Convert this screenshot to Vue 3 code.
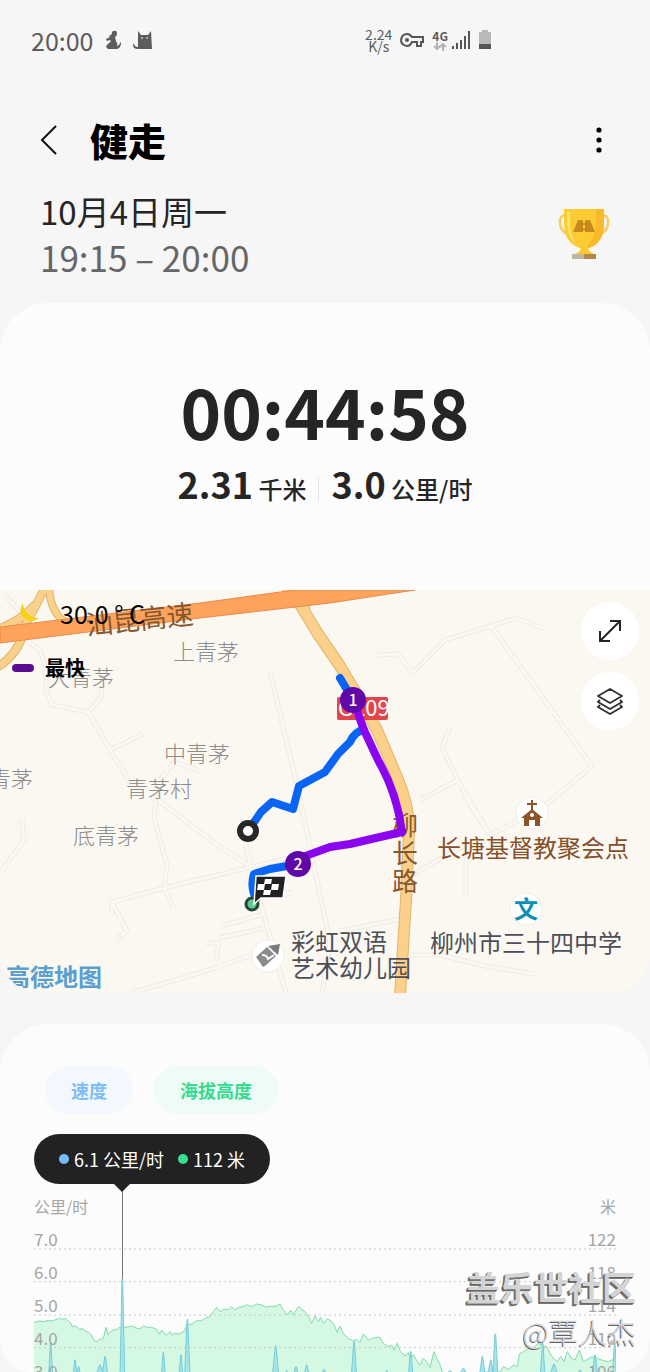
<script setup>
import { computed } from "vue";

const villages = [
  { name: "上青茅", x: 173, y: 70 },
  { name: "大青茅", x: 48, y: 96 },
  { name: "中青茅", x: 164, y: 172 },
  { name: "青茅", x: -11, y: 197 },
  { name: "青茅村", x: 126, y: 207 },
  { name: "底青茅", x: 73, y: 254 },
];

const places = [
  { name: "长塘基督教聚会点", x: 437, y: 267, kind: "brown" },
  { name: "柳州市三十四中学", x: 430, y: 362, kind: "dark" },
  { name: "彩虹双语", x: 291, y: 361, kind: "dark" },
  { name: "艺术幼儿园", x: 291, y: 387, kind: "dark" },
];

const lanes = [
  "M5 5L25 28M30 53L40 60 46 78 46 100 52 115 88 122 101 107 102 95M88 122L110 160 132 195M110 160L143 144M160 190L174 172 200 181",
  "M270 82L297 195 330 352 322 403M378 65L398 64 413 83 445 50 491 36 516 28 545 39M491 36L592 176 540 220 490 245 463 200M450 137L442 158 458 190 470 215 490 245M420 210L458 190",
  "M158 210L213 252 248 275M156 208L154 228 167 275 164 298 174 318M0 283L24 250 22 230M112 325L112 312 164 298 330 258M112 312L127 341 116 350M246 255L254 290 286 403",
  "M132 403L215 378 260 362M205 353L219 353 216 365 222 377M219 348L270 337M222 336L264 324M275 307L293 302M340 341L400 329M402 290L466 255M466 260L466 308M410 365L440 365 490 377 535 384",
];

const ticks = [
  { speed: "7.0", height: "122" },
  { speed: "6.0", height: "118" },
  { speed: "5.0", height: "114" },
  { speed: "4.0", height: "110" },
  { speed: "3.0", height: "106" },
];

const gridLines = [597, 695, 795, 893];

const elevation = [
  102, 818, 115, 813, 130, 815, 145, 811, 155, 813, 170, 808, 178, 804, 185, 808,
  195, 805, 205, 814, 212, 818, 217, 830, 228, 828, 238, 838, 248, 836, 258, 845,
  265, 846, 275, 855, 282, 872, 292, 875, 300, 865, 305, 870, 312, 858, 318, 832,
  324, 855, 335, 842, 350, 838, 360, 832, 375, 832, 388, 830, 398, 828, 412, 836,
  420, 836, 430, 828, 440, 832, 455, 832, 470, 838, 478, 852, 485, 840, 492, 850,
  500, 855, 510, 845, 516, 855, 525, 850, 535, 852, 545, 848, 555, 840, 560, 825,
  575, 822, 590, 812, 605, 812, 620, 802, 628, 802, 640, 785, 650, 772, 660, 785,
  672, 778, 685, 778, 695, 770, 705, 780, 715, 772, 730, 770, 740, 764, 755, 770,
  770, 762, 785, 765, 800, 772, 810, 768, 825, 770, 840, 762, 850, 780, 862, 795,
  872, 780, 880, 795, 895, 770, 905, 778, 915, 785, 925, 798, 935, 820, 945, 798,
  955, 815, 962, 802, 970, 820, 982, 806, 992, 812, 1002, 825, 1012, 848, 1020, 828,
  1030, 850, 1045, 866, 1060, 872, 1070, 868, 1080, 878, 1090, 852, 1105, 870,
  1118, 865, 1128, 862, 1140, 862, 1150, 880, 1165, 890, 1175, 885, 1182, 900,
  1192, 880, 1200, 902, 1215, 918, 1225, 908, 1232, 928, 1240, 914, 1252, 935,
  1260, 945, 1270, 925, 1280, 935, 1290, 952, 1302, 905, 1310, 925, 1318, 938,
  1328, 968, 1400, 972, 1450, 966, 1500, 966, 1510, 950, 1525, 958, 1540, 945,
  1552, 950, 1558, 912, 1570, 905, 1585, 895, 1600, 893, 1615, 880, 1630, 888,
  1640, 890, 1650, 910, 1660, 925, 1672, 935, 1682, 920, 1692, 935, 1702, 905,
  1715, 925, 1725, 930, 1738, 900, 1750, 935, 1760, 930, 1775, 920, 1790, 925,
  1805, 930, 1825, 935, 1848, 925,
];

// [x, peak, half width]
const spikes = [
  [152, 880, 6], [225, 930, 6], [236, 950, 6], [300, 945, 14], [315, 920, 9],
  [367, 685, 7], [490, 908, 6], [543, 915, 6], [562, 808, 8], [827, 888, 10],
  [860, 962, 5], [888, 950, 10], [920, 945, 9], [972, 958, 8], [1062, 875, 8],
  [1160, 962, 8], [1232, 905, 7], [1350, 962, 20], [1390, 955, 16], [1447, 920, 9],
  [1472, 930, 9], [1486, 852, 8], [1628, 880, 7], [1662, 942, 14], [1740, 960, 10],
  [1785, 915, 8], [1844, 875, 6],
];

const elevationLine = computed(() => "M" + elevation.join(" "));
const elevationArea = computed(() => elevationLine.value + " V980 H102 Z");
const speedPath = computed(() =>
  spikes.map(([x, peak, w]) => `M${x - w} 980L${x - 1} ${peak}h2L${x + w} 980`).join("")
);
</script>

<template>
  <div class="page">
    <div class="status-bar">
      <span class="clock">20:00</span>
      <svg class="status-girl" viewBox="0 0 18 20" width="18" height="20">
        <path d="M9 1q4-1 4 2 0 3-2 4l1 4q2 3 1 5 3-1 3-4l1 1q0 5-4 6H4q-3-2-1-4l4-4-1-1-3 1-1-2 4-2-1-1 3-2q-1-2 1-3z" />
      </svg>
      <svg class="status-cat" viewBox="0 0 20 20" width="20" height="20">
        <path d="M5 1l3 4h7l3-4 1 18H5q-5 0-5-4l1-2q0 4 4 4z" />
        <path d="M8 8h2M13 8h2" stroke="#f6f6f6" />
      </svg>
      <div class="status-right">
        <div class="rate">2.24<br />K/s</div>
        <svg viewBox="0 0 24 16" width="24" height="16" fill="none" stroke="#555" stroke-width="2">
          <path d="M12 5h11v5h-2v4h-4v-4h-5Q10 14 7 14 1 13 1 8 2 2 7 2q3 0 5 3z" />
          <circle cx="7" cy="8" r="2" fill="#555" stroke="none" />
        </svg>
        <div class="network">
          <span>4G</span>
          <svg viewBox="0 0 14 9" width="14" height="9" fill="none" stroke="#b5b5b5" stroke-width="2">
            <path d="M4 0v7M1 4l3 3 3-3M10 9V2M7 5l3-3 3 3" />
          </svg>
        </div>
        <svg class="signal" viewBox="0 0 18 18" width="18" height="18" fill="none" stroke="#555" stroke-width="2">
          <path d="M1 18v-3M5 18v-6M9 18V9M13 18V5M17 18V0" />
        </svg>
        <svg viewBox="0 0 14 20" width="14" height="20">
          <path d="M4 0h6v2h3v12H1V2h3z" fill="#b9b9b9" />
          <path d="M1 14h12v5H1z" fill="#555" />
        </svg>
      </div>
    </div>

    <header class="title-bar">
      <button class="icon-btn" aria-label="返回">
        <svg viewBox="0 0 18 32" width="18" height="32" fill="none" stroke="#111" stroke-width="2">
          <path d="M16 2L2 16l14 14" />
        </svg>
      </button>
      <h1>健走</h1>
      <button class="icon-btn more" aria-label="更多">
        <svg viewBox="0 0 6 28" width="6" height="28">
          <circle cx="3" cy="4" r="2.6" />
          <circle cx="3" cy="14" r="2.6" />
          <circle cx="3" cy="24" r="2.6" />
        </svg>
      </button>
    </header>

    <section class="session">
      <div>
        <p class="date">10月4日周一</p>
        <p class="period">19:15 – 20:00</p>
      </div>
      <svg class="trophy" viewBox="0 0 52 52" width="52" height="52">
        <path d="M8 7Q1 7 2 16q1 9 12 12M44 7q7 0 6 9-1 9-12 12" fill="none" stroke="#f8cf60" stroke-width="2.5" />
        <path d="M6 1h40v14q0 20-15 25h-9Q6 35 6 15z" fill="#fdcc34" />
        <path d="M38 1h8v14q0 20-15 25h-4Q38 30 38 15z" fill="#f8b92c" />
        <path d="M9 4v11q1 15 9 20-6-8-6-20V4z" fill="#ffe372" />
        <path d="M23 38h7l1 5 5 3H17l5-3z" fill="#fcc72f" />
        <path d="M14 46h12v5H14z" fill="#bdb79f" />
        <path d="M26 46h12v5H26z" fill="#b48650" />
        <path d="M20 12h12l5 12H15z" fill="#c88a1c" />
        <path d="M26 12v3m0 2v3m0 2v2" stroke="#fdcc34" stroke-width="2" />
      </svg>
    </section>

    <section class="summary">
      <div class="duration">00:44:58</div>
      <div class="stats">
        <div><b>2.31</b> 千米</div>
        <i class="divider"></i>
        <div><b>3.0</b> 公里/时</div>
      </div>
    </section>

    <section class="map">
      <svg class="map-canvas" viewBox="0 0 650 403">
        <rect width="650" height="403" fill="#fbf8f2" />
        <g fill="none" stroke-linejoin="round">
          <g stroke="#eeebe6" stroke-width="5">
            <path v-for="lane in lanes" :key="lane" :d="lane" />
          </g>
          <g stroke="#fbf8f3" stroke-width="3">
            <path v-for="lane in lanes" :key="lane" :d="lane" />
          </g>
          <g stroke="#dfb46c" stroke-width="12">
            <path d="M46-4L26 34Q20 64-4 78M-4 40Q20 32 36 14" stroke-width="9" />
            <path d="M49-4Q50 22 65 32M284-4L306 24M306 8V26" stroke-width="8" />
            <path d="M295 6L318 44 340 76 356 103 377 140 397 187Q409 215 409 240L406 310 400 406" />
          </g>
          <g stroke="#fbd08a" stroke-width="10">
            <path d="M46-4L26 34Q20 64-4 78M-4 40Q20 32 36 14" stroke-width="7" />
            <path d="M49-4Q50 22 65 32M284-4L306 24M306 8V26" stroke-width="6" />
            <path d="M295 6L318 44 340 76 356 103 377 140 397 187Q409 215 409 240L406 310 400 406" />
          </g>
        </g>
        <path d="M0 37L200 13 295 0H415L330 13 200 28 0 53z" fill="#ffa35c" stroke="#e58c4b" />

        <g class="village">
          <text v-for="v in villages" :key="v.name" :x="v.x" :y="v.y">{{ v.name }}</text>
        </g>
        <g class="road-name">
          <text x="87" y="45" transform="rotate(-6 87 45)" class="highway">汕昆高速</text>
          <text x="392" y="245">柳</text>
          <text x="392" y="273">长</text>
          <text x="392" y="301">路</text>
        </g>

        <g fill="#fff" stroke="#f0eeea">
          <circle cx="532" cy="223" r="16" />
          <circle cx="526" cy="319" r="16" />
          <circle cx="268" cy="366" r="16" />
        </g>
        <path d="M532 210v13M527 214h10" stroke="#8d5527" stroke-width="2" />
        <path d="M532 219l11 9h-3v8h-5v-6h-6v6h-5v-8h-3z" fill="#8d5527" />
        <circle cx="532" cy="225" r="2" fill="#fff" />
        <text x="514" y="328" class="school">文</text>
        <path d="M256 367l11-10 9 9-11 10q-3 2-4-2z" fill="#8b8b8b" />
        <path d="M268 356l12-2-2 11z" fill="#7b7b7b" />
        <path d="M262 365q5 0 6 4l6-4" fill="none" stroke="#fff" stroke-width="2" />
        <g class="place">
          <text v-for="p in places" :key="p.name" :x="p.x" :y="p.y" :class="p.kind">{{ p.name }}</text>
        </g>

        <rect x="337" y="107" width="51" height="23" rx="2" fill="#e3454c" />
        <text x="338" y="126" class="route-no">G209</text>

        <g fill="none" stroke-width="8" stroke-linecap="round" stroke-linejoin="round">
          <path d="M340 88L353 110M364 140Q355 141 350 152L338 164 325 182 299 196 293 219 272 212 261 222 250 238M298 274L270 279 254 284Q250 296 256 309" stroke="#0a64f5" />
          <path d="M353 110L364 140 378 170Q397 203 402 242L380 247 350 254 330 257 300 268" stroke="#8b06ef" />
        </g>
        <circle cx="353" cy="110" r="13" fill="#6109a8" />
        <text x="353" y="116" class="km">1</text>
        <circle cx="298" cy="274" r="13" fill="#6109a8" />
        <text x="298" y="280" class="km">2</text>
        <circle cx="248" cy="241" r="8" fill="#fff" stroke="#272727" stroke-width="6" />
        <circle cx="252" cy="314" r="6" fill="#5ecb8c" stroke="#27443a" stroke-width="3" />
        <path d="M256 286h30l-3 22h-22l-7 6z" fill="#222" stroke="#fff" stroke-width="1.5" />
        <path d="M265 289h7l-1 5h-7zM258 294h7l-1 6h-7zM272 294h7l-1 6h-7zM264 300h7l-1 5h-7z" fill="#fff" />
        <text x="6" y="396" class="brand">高德地图</text>
      </svg>

      <div class="weather">
        <svg viewBox="0 0 20 20" width="20" height="20">
          <path d="M3 0Q-2 8 3 14q7 8 16 1Q12 15 8 11 3 6 3 0z" fill="#f4d313" />
        </svg>
        <span>30.0 ° C</span>
      </div>
      <div class="legend"><i></i>最快</div>
      <div class="map-tools">
        <button aria-label="全屏">
          <svg viewBox="0 0 26 26" width="26" height="26" fill="none" stroke="#252525" stroke-width="2">
            <path d="M3 23L23 3M13 3h10v10M3 13v10h10" />
          </svg>
        </button>
        <button aria-label="图层">
          <svg viewBox="0 0 28 28" width="28" height="28" fill="none" stroke="#333" stroke-width="2" stroke-linejoin="round">
            <path d="M14 2l12 7-12 7L2 9zM4 13l-2 2 12 7 12-7-2-2M4 18l-2 2 12 7 12-7-2-2" />
          </svg>
        </button>
      </div>
    </section>

    <section class="chart-card">
      <div class="chips">
        <button class="chip chip-speed">速度</button>
        <button class="chip chip-height">海拔高度</button>
      </div>

      <div class="tip">
        <i class="dot dot-speed"></i>
        <span>6.1 公里/时</span>
        <i class="dot dot-height"></i>
        <span>112 米</span>
      </div>

      <div class="units">
        <span>公里/时</span>
        <span>米</span>
      </div>

      <div class="chart">
        <svg class="plot" viewBox="102 501 1746 465" preserveAspectRatio="none">
          <path :d="elevationArea" fill="#d5f8e3" />
          <path :d="elevationLine" class="line-height" />
          <path :d="speedPath" class="line-speed" />
          <path v-for="y in gridLines" :key="y" :d="`M102 ${y}H1848`" class="grid-line" />
        </svg>
        <div v-for="t in ticks" :key="t.speed" class="tick">
          <span>{{ t.speed }}</span>
          <span>{{ t.height }}</span>
        </div>
      </div>

      <div class="watermark">
        <strong>盖乐世社区</strong>
        <span>@覃人杰</span>
      </div>
    </section>
  </div>
</template>

<style>
body {
  margin: 0;
  background: #f6f6f6;
}
</style>

<style scoped>
.page {
  font-family: "Noto Sans CJK SC", "Noto Sans", sans-serif;
  color: #252525;
  background: #f6f6f6;
  overflow: hidden;
}

button {
  border: none;
  padding: 0;
  font-family: inherit;
  cursor: pointer;
}

svg {
  display: block;
  flex-shrink: 0;
}

p,
h1 {
  margin: 0;
}

.status-bar {
  display: flex;
  align-items: center;
  box-sizing: border-box;
  height: 80px;
  padding: 0 158px 0 31px;
  color: #5c5c5c;
}

.clock {
  font-size: 25px;
  line-height: 30px;
}

.status-girl,
.status-cat {
  margin-left: 11px;
  fill: #5c5c5c;
}

.status-right {
  display: flex;
  align-items: center;
  gap: 8px;
  margin-left: auto;
}

.rate {
  font-size: 14px;
  line-height: 12px;
  text-align: center;
}

.network {
  display: flex;
  flex-direction: column;
  align-items: center;
  font-size: 12px;
  font-weight: 700;
  line-height: 12px;
}

.signal {
  margin-left: -4px;
}

.title-bar {
  display: flex;
  align-items: center;
  height: 96px;
  margin-top: 12px;
  padding: 0 44px 0 40px;
}

.icon-btn {
  display: flex;
  background: none;
}

.title-bar h1 {
  margin-left: 32px;
  font-size: 38px;
  font-weight: 900;
  line-height: 50px;
  color: #000;
}

.more {
  width: 14px;
  justify-content: center;
  margin-left: auto;
}

.session {
  display: flex;
  align-items: center;
  justify-content: space-between;
  padding: 0 40px 23px;
}

.date {
  font-size: 33px;
  line-height: 46px;
}

.period {
  font-size: 35px;
  line-height: 46px;
  color: #666;
}

.summary {
  padding: 63px 0 75px;
  border-radius: 48px 48px 0 0;
  background: #fcfcfc;
  text-align: center;
}

.duration {
  margin-bottom: 9px;
  font-size: 69px;
  font-weight: 700;
  line-height: 88px;
}

.stats {
  display: flex;
  align-items: center;
  justify-content: center;
  gap: 12px;
  height: 52px;
  font-size: 24px;
  font-weight: 500;
  line-height: 52px;
}

.stats b {
  font-size: 36px;
  font-weight: 700;
  line-height: 1;
}

.divider {
  width: 1px;
  height: 24px;
  background: #e4e4e4;
}

.map {
  position: relative;
  overflow: hidden;
  border-radius: 0 0 40px 40px;
}

.map-canvas {
  width: 100%;
}

.village {
  font-size: 22px;
  font-weight: 300;
  fill: #8c8c8c;
}

.road-name {
  font-size: 26px;
  fill: #85582f;
}

.highway {
  font-size: 27px;
}

.place {
  font-size: 24px;
}

.brown {
  fill: #85502a;
}

.dark {
  fill: #4c4f58;
}

.school {
  font-size: 24px;
  font-weight: 700;
  fill: #0c8fb5;
}

.route-no {
  font-size: 22px;
  fill: #fff;
}

.km {
  font-size: 16px;
  font-weight: 500;
  text-anchor: middle;
  fill: #fff;
}

.brand {
  font-size: 24px;
  font-weight: 700;
  fill: #5a9fd0;
}

.weather {
  position: absolute;
  top: 7px;
  left: 20px;
  display: flex;
  align-items: center;
  gap: 20px;
  font-size: 25px;
  line-height: 32px;
  color: #000;
}

.legend {
  position: absolute;
  top: 64px;
  left: 12px;
  display: flex;
  align-items: center;
  gap: 11px;
  font-size: 20px;
  font-weight: 700;
  line-height: 28px;
  color: #000;
}

.legend i {
  width: 22px;
  height: 8px;
  border-radius: 4px;
  background: #5a0d92;
}

.map-tools {
  position: absolute;
  top: 12px;
  right: 11px;
  display: flex;
  flex-direction: column;
  gap: 12px;
}

.map-tools button {
  display: flex;
  align-items: center;
  justify-content: center;
  width: 58px;
  height: 58px;
  border-radius: 50%;
  background: #fff;
}

.chart-card {
  position: relative;
  margin-top: 31px;
  padding: 42px 34px 0;
  border-radius: 48px 48px 28px 28px / 48px 48px 36px 36px;
  background: #fcfcfc;
}

.chips {
  display: flex;
  gap: 21px;
  padding-left: 11px;
}

.chip {
  height: 48px;
  padding: 0 26px;
  border-radius: 24px;
  font-size: 18px;
  font-weight: 700;
}

.chip-speed {
  color: #7dbcf8;
  background: #f3f8fe;
}

.chip-height {
  color: #35db91;
  background: #effcf6;
}

.tip {
  position: relative;
  z-index: 1;
  display: flex;
  align-items: center;
  width: fit-content;
  height: 50px;
  margin-top: 20px;
  padding: 0 25px;
  border-radius: 25px;
  background: #222;
  color: #fff;
  font-size: 18px;
}

.tip::before {
  content: "";
  position: absolute;
  top: 100%;
  left: 88px;
  width: 1px;
  height: 95px;
  background: #777;
}

.tip::after {
  content: "";
  position: absolute;
  top: 100%;
  left: 80px;
  border: 8px solid transparent;
  border-top-color: #222;
  border-bottom: none;
}

.dot {
  width: 10px;
  height: 10px;
  margin-right: 5px;
  border-radius: 50%;
}

.dot-speed {
  background: #74bbff;
}

.dot-height {
  margin-left: 14px;
  background: #35df91;
}

.units {
  display: flex;
  justify-content: space-between;
  padding: 12px 0 1px;
  font-size: 16px;
  line-height: 20px;
  color: #a5a5a5;
}

.chart {
  position: relative;
  height: 155px;
  overflow: hidden;
}

.plot {
  position: absolute;
  inset: 0;
  width: 100%;
  height: 100%;
}

.plot path {
  vector-effect: non-scaling-stroke;
}

.line-height {
  fill: none;
  stroke: #83dbab;
}

.line-speed {
  fill: #a5e4e8;
  stroke: #73cdd9;
}

.grid-line {
  stroke: #c8c8c8;
  stroke-dasharray: 2 3;
}

.tick {
  position: relative;
  display: flex;
  align-items: flex-end;
  justify-content: space-between;
  height: 33px;
  font-size: 17px;
  line-height: 22px;
  color: #a5a5a5;
}

.watermark {
  position: absolute;
  right: 14px;
  bottom: 19px;
  display: flex;
  flex-direction: column;
  align-items: flex-end;
  line-height: 44px;
  color: #d4d4d4;
  text-shadow: -1px 1px 0 #666, -2px 2px 0 #777;
}

.watermark strong {
  font-size: 34px;
  font-weight: 700;
}

.watermark span {
  font-size: 29px;
  font-weight: 300;
  text-shadow: -1px 1px 0 #666;
}
</style>
